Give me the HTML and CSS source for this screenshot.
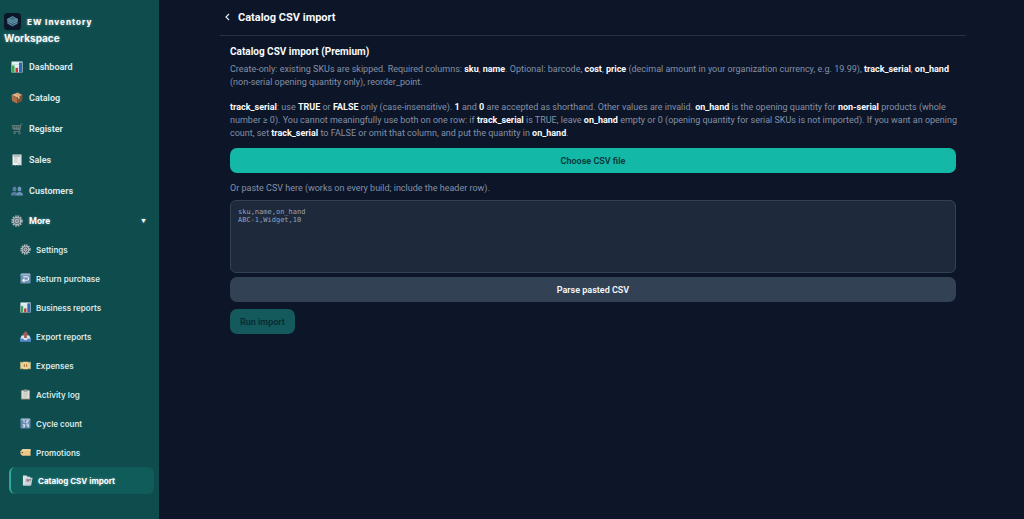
FILE: index.html
```html
<!DOCTYPE html>
<html lang="en">
<head>
  <meta charset="UTF-8">
  <meta name="viewport" content="width=device-width, initial-scale=1.0">
  <title>Catalog CSV import - EW Inventory</title>
  <link rel="stylesheet" href="styles.css">
</head>
<body>
  <!-- Shared icons -->
  <svg class="sprite" aria-hidden="true">
    <symbol id="i-chart" viewBox="0 0 24 24">
      <rect x="1" y="1" width="22" height="22" fill="#e6f0f2"/>
      <path d="M1 7h22M1 13h22M1 19h22" stroke="#b9cbd0" stroke-width="1"/>
      <rect x="2" y="9" width="5" height="14" fill="#35a653"/>
      <rect x="9" y="14" width="5" height="9" fill="#c8323c"/>
      <rect x="16" y="3" width="6" height="20" fill="#2f68ba"/>
    </symbol>
    <symbol id="i-gear" viewBox="0 0 24 24">
      <circle cx="12" cy="12" r="9.5" fill="none" stroke="#aab4ba" stroke-width="4" stroke-dasharray="3 2"/>
      <circle cx="12" cy="12" r="7.5" fill="#55636a" stroke="#c2cacd" stroke-width="2"/>
      <path d="M12 5v14M5 12h14M7 7l10 10M17 7L7 17" stroke="#9ba7ac" stroke-width="1.3"/>
      <circle cx="12" cy="12" r="3" fill="#64737a" stroke="#d3d9dc" stroke-width="1.5"/>
    </symbol>
  </svg>

  <div class="app">
    <aside class="sidebar">
      <div class="brand">
        <svg class="logo" viewBox="0 0 34 34" aria-hidden="true">
          <rect width="34" height="34" rx="7" fill="#0b1729"/>
          <path d="M6 13l11-6 11 6v8l-11 6-11-6z" fill="#3c7085"/>
          <path d="M6 13l11 6 11-6M6 17l11 6 11-6M6 21l11 6 11-6M17 19v8" fill="none" stroke="#17384d" stroke-width="1.2"/>
          <path d="M6 13l11-6 11 6-11 6zM9 12l8 4 8-4M7 16l10 5 10-5M8 20l9 5 9-5" fill="none" stroke="#78aabc" stroke-width="1.3"/>
        </svg>
        <span class="brand-name">EW Inventory</span>
      </div>
      <div class="workspace">Workspace</div>

      <nav class="nav">
        <a class="nav-item" href="#"><svg class="icon"><use href="#i-chart"/></svg>Dashboard</a>
        <a class="nav-item" href="#">
          <svg class="icon" viewBox="0 0 24 24">
            <path d="M1 6l12-5 10 5-11 5z" fill="#d3a477"/>
            <path d="M1 6l11 5v12L2 18z" fill="#a97047"/>
            <path d="M12 11l11-5-1 12-10 5z" fill="#85502f"/>
            <path d="M6 4l11 5v4l-3 1v-4L4 5z" fill="#e2c29b"/>
          </svg>Catalog</a>
        <a class="nav-item" href="#">
          <svg class="icon" viewBox="0 0 24 24" fill="none" stroke="#748482" stroke-width="1.4">
            <path d="M23 2h-3l-3 15H5M2 5h17l-2 9-13-2zM3 8h15M4 11h14M6 5l1 8M10 5l1 8M14 5v9"/>
            <circle cx="7" cy="20" r="2"/><circle cx="17" cy="20" r="2"/>
          </svg>Register</a>
        <a class="nav-item" href="#">
          <svg class="icon" viewBox="0 0 24 24">
            <path d="M3 1h18v22l-3-1-3 1-3-1-3 1-3-1-3 1z" fill="#edf0ee"/>
            <path d="M5 4h14" stroke="#7d8d91" stroke-width="2"/>
            <path d="M6 8h8M6 12h7M6 16h8M17 8h2M17 12h2M17 16h2M14 20h5" stroke="#a5afb1" stroke-width="1.4"/>
          </svg>Sales</a>
        <a class="nav-item" href="#">
          <svg class="icon" viewBox="0 0 24 24" fill="#557da1">
            <ellipse cx="7" cy="8" rx="4" ry="5"/><path d="M0 21c0-6 3-7 7-7s6 2 6 7z"/>
            <g fill="#6b93b5"><ellipse cx="17" cy="8" rx="4" ry="5"/><path d="M11 21c0-6 3-7 6-7s7 1 7 7z"/></g>
          </svg>Customers</a>
        <button class="nav-item more" type="button" aria-expanded="true">
          <svg class="icon"><use href="#i-gear"/></svg>More<span class="caret">▼</span>
        </button>
      </nav>

      <nav class="subnav">
        <a class="sub-item" href="#"><svg class="icon"><use href="#i-gear"/></svg>Settings</a>
        <a class="sub-item" href="#">
          <svg class="icon" viewBox="0 0 24 24">
            <rect x="1" y="1" width="22" height="22" rx="3" fill="#6f91b4"/>
            <path d="M1 5c0-3 2-4 4-4h14c2 0 4 1 4 4z" fill="#9cb5cc"/>
            <path d="M7 8h8c5 0 5 8 0 8H7M10 12l-4 4 4 4" fill="none" stroke="#f3f7fa" stroke-width="2.3"/>
          </svg>Return purchase</a>
        <a class="sub-item" href="#"><svg class="icon"><use href="#i-chart"/></svg>Business reports</a>
        <a class="sub-item" href="#">
          <svg class="icon" viewBox="0 0 24 24">
            <path d="M4 10h16l4 7v6H0v-6z" fill="#6f9ed0"/>
            <path d="M4 10h16l3 7h-6l-2 3H9l-2-3H1z" fill="#d5e5ef"/>
            <path d="M12 0l7 8h-4v7H9V8H5z" fill="#a35e5a"/>
            <path d="M0 17h7l2 3h6l2-3h7v6H0z" fill="#4f88c5"/>
          </svg>Export reports</a>
        <a class="sub-item" href="#">
          <svg class="icon" viewBox="0 0 24 24">
            <rect x="0" y="4" width="24" height="16" fill="#a6a171"/>
            <rect x="2" y="6" width="20" height="12" fill="#d9d6a8"/>
            <rect x="7" y="4" width="10" height="16" fill="#f0d58f"/>
            <circle cx="12" cy="12" r="4" fill="#b87535"/>
            <path d="M12 8v8" stroke="#f6e5b0" stroke-width="2"/>
          </svg>Expenses</a>
        <a class="sub-item" href="#">
          <svg class="icon" viewBox="0 0 24 24">
            <rect x="2" y="2" width="20" height="21" rx="2" fill="#9b8a72"/>
            <path d="M4 4h16v17H4z" fill="#dedfd7"/>
            <path d="M8 1h8v5H8z" fill="#8e9c9c"/>
            <path d="M7 9h10M7 13h10M7 17h8" stroke="#aab2ad" stroke-width="1.4"/>
          </svg>Activity log</a>
        <a class="sub-item" href="#">
          <svg class="icon" viewBox="0 0 24 24">
            <rect x="1" y="1" width="22" height="22" rx="3" fill="#6386ae"/>
            <path d="M1 5c0-3 2-4 4-4h14c2 0 4 1 4 4z" fill="#91adc9"/>
            <path d="M7 5l2-1v7M14 5h4v3h-4v3h4M6 14h4v6H6M6 17h4M15 13v4h4M18 13v8" fill="none" stroke="#edf3f7" stroke-width="1.7"/>
          </svg>Cycle count</a>
        <a class="sub-item" href="#">
          <svg class="icon" viewBox="0 0 24 24">
            <path d="M5 5h18v14H5l-4-4V9z" fill="#efc584"/>
            <path d="M5 5h18v3H4z" fill="#f8dba9"/>
            <circle cx="5" cy="12" r="1.8" fill="#755a3d"/>
          </svg>Promotions</a>
        <a class="sub-item active" href="#" aria-current="page">
          <svg class="icon" viewBox="0 0 24 24">
            <path d="M2 1h8l2 3h6v19H2z" fill="#dbe3e5"/>
            <path d="M8 6h15l-3 17H5z" fill="#c2ced3"/>
            <path d="M10 9h6v5h-6z" fill="#a9656e"/>
            <path d="M14 8h8l-4 8zM7 18h9" fill="#6d8498" stroke="#eef3f3"/>
          </svg>Catalog CSV import</a>
      </nav>
    </aside>

    <main class="page">
      <header class="page-header">
        <a class="back" href="#" aria-label="Back">
          <svg viewBox="0 0 6 8" aria-hidden="true"><path d="M4 1L1 4l3 3"/></svg>
        </a>
        <h1>Catalog CSV import</h1>
      </header>

      <section class="import">
        <h2>Catalog CSV import (Premium)</h2>
        <div class="help">
          <p>Create-only: existing SKUs are skipped. Required columns: <b>sku</b>, <b>name</b>. Optional: barcode, <b>cost</b>, <b>price</b> (decimal amount in your organization currency, e.g. 19.99), <b>track_serial</b>, <b>on_hand</b> (non-serial opening quantity only), reorder_point.</p>
          <p><b>track_serial</b>: use <b>TRUE</b> or <b>FALSE</b> only (case-insensitive). <b>1</b> and <b>0</b> are accepted as shorthand. Other values are invalid. <b>on_hand</b> is the opening quantity for <b>non-serial</b> products (whole number ≥ 0). You cannot meaningfully use both on one row: if <b>track_serial</b> is TRUE, leave <b>on_hand</b> empty or 0 (opening quantity for serial SKUs is not imported). If you want an opening count, set <b>track_serial</b> to FALSE or omit that column, and put the quantity in <b>on_hand</b>.</p>
        </div>
        <button class="btn primary" type="button">Choose CSV file</button>
        <label for="csv">Or paste CSV here (works on every build; include the header row).</label>
        <textarea id="csv" spellcheck="false" placeholder="sku,name,on_hand&#10;ABC-1,Widget,10"></textarea>
        <button class="btn secondary" type="button">Parse pasted CSV</button>
        <button class="btn run" type="button" disabled>Run import</button>
      </section>
    </main>
  </div>
</body>
</html>
```
FILE: styles.css
```css
* {
  box-sizing: border-box;
}

body {
  margin: 0;
  font-family: Roboto, "Liberation Sans", sans-serif;
  font-size: 9px;
  color: #f8fafc;
  background: #0d1528;
}

a {
  color: inherit;
  text-decoration: none;
}

button {
  font: inherit;
  color: inherit;
  border: 0;
  cursor: pointer;
}

.sprite {
  position: absolute;
  width: 0;
  height: 0;
}

.app {
  display: flex;
  min-height: 100vh;
}

/* Sidebar */
.sidebar {
  flex: 0 0 159px;
  padding: 13px 5px 0 4px;
  font-family: Inter, "Liberation Sans", sans-serif;
  background: #0f4c4e;
}

.brand {
  display: flex;
  align-items: center;
  gap: 6px;
}

.logo {
  width: 17px;
  height: 17px;
}

.brand-name {
  font-size: 8px;
  font-weight: 800;
  letter-spacing: 1px;
  text-shadow: 0 0 3px rgba(255, 255, 255, 0.4);
}

.workspace {
  font-size: 10px;
  line-height: 16px;
  font-weight: 700;
  text-shadow: 0 0 3px rgba(255, 255, 255, 0.4);
}

.nav {
  display: flex;
  flex-direction: column;
  padding-top: 5px;
}

.nav-item {
  display: flex;
  align-items: center;
  gap: 6px;
  height: 31px;
  padding: 0 7px;
  font-family: Roboto, "Liberation Sans", sans-serif;
  font-size: 9px;
  font-weight: 600;
  color: #e0eeee;
}

.icon {
  flex: none;
  width: 12px;
  height: 12px;
}

.more {
  height: 29px;
  background: none;
  color: #fff;
  font-weight: 700;
  text-shadow: 0 0 3px rgba(255, 255, 255, 0.4);
}

.caret {
  margin-left: auto;
  font-size: 7px;
}

.subnav {
  display: flex;
  flex-direction: column;
  padding-left: 5px;
}

.sub-item {
  display: flex;
  align-items: center;
  gap: 5px;
  height: 29px;
  padding-left: 11px;
  font-size: 8px;
  font-weight: 600;
  color: #d9e9e9;
}

.sub-item .icon {
  width: 11px;
  height: 11px;
}

.sub-item.active {
  height: 27px;
  border-left: 2px solid #2fa99c;
  border-radius: 6px;
  background: #0f5c5a;
  color: #fff;
  font-weight: 700;
  text-shadow: 0 0 3px rgba(255, 255, 255, 0.4);
}

/* Page */
.page {
  flex: 1;
  padding: 0 58px 0 61px;
}

.page-header {
  display: flex;
  align-items: center;
  gap: 7px;
  height: 36px;
  padding: 0 5px 1px;
  border-bottom: 1px solid #263145;
}

.back svg {
  display: block;
  width: 6px;
  height: 8px;
  fill: none;
  stroke: #e2e8f0;
  stroke-width: 1.2;
}

h1 {
  margin: 0;
  font-size: 11px;
  font-weight: 700;
}

.import {
  display: flex;
  flex-direction: column;
  padding: 9px 10px;
}

h2 {
  margin: 0 0 4px;
  font-size: 10px;
  line-height: 14px;
  font-weight: 700;
}

.help {
  display: flex;
  flex-direction: column;
  gap: 12px;
  margin: 0 -4px 8px 0;
}

p {
  margin: 0;
  line-height: 13px;
  color: #8491a7;
}

p b {
  color: #f8fafc;
  font-weight: 700;
}

.btn {
  height: 25px;
  border-radius: 7px;
  font-size: 9px;
  font-weight: 600;
}

.primary {
  background: #14b8a6;
  color: #08343a;
}

label {
  margin: 9px 0 5px;
  line-height: 13px;
  color: #8491a7;
}

textarea {
  width: 100%;
  height: 73px;
  margin-bottom: 4px;
  padding: 7px;
  border: 1px solid #334155;
  border-radius: 6px;
  background: #1e293b;
  color: #f8fafc;
  font-family: "DejaVu Sans Mono", "Liberation Mono", monospace;
  font-size: 7px;
  line-height: 8px;
  resize: none;
}

textarea::placeholder {
  color: #94a3b8;
}

.secondary {
  margin-bottom: 7px;
  background: #334155;
}

.run {
  align-self: flex-start;
  padding: 0 10px;
  background: #14595c;
  color: #082b35;
  cursor: default;
}
```
